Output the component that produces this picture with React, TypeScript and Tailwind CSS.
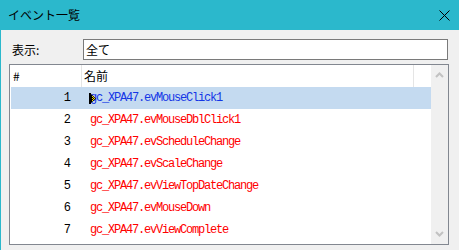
import React from 'react';

const EVENTS = [
  'gc_XPA47.evMouseClick1',
  'gc_XPA47.evMouseDblClick1',
  'gc_XPA47.evScheduleChange',
  'gc_XPA47.evScaleChange',
  'gc_XPA47.evViewTopDateChange',
  'gc_XPA47.evMouseDown',
  'gc_XPA47.evViewComplete',
];

const ui = { fontFamily: '"Noto Sans CJK JP", "Noto Sans", sans-serif' };
const mono = { fontFamily: '"Liberation Mono", "DejaVu Sans Mono", monospace' };

const Cursor: React.FC = () => (
  <svg className="absolute left-[-1px] top-[4px]" width="7" height="11" viewBox="0 0 7 11">
    <rect x="0" y="0" width="2" height="11" fill="#000" />
    <polygon points="2,1 7,5.5 2,10" fill="#000" />
    <rect x="3" y="3" width="1" height="1" fill="#f5e000" />
    <rect x="3" y="5" width="1" height="1" fill="#f5e000" />
    <rect x="4" y="4" width="1" height="1" fill="#f5e000" />
    <rect x="4" y="6" width="1" height="1" fill="#f5e000" />
    <rect x="3" y="7" width="1" height="1" fill="#f5e000" />
    <rect x="5" y="5" width="1" height="1" fill="#f5e000" />
  </svg>
);

const App: React.FC = () => {
  return (
    <div className="w-[459px] h-[250px] bg-[#f0f0f0] border-l border-[#2bb8cc] flex flex-col overflow-hidden" style={ui}>
      {/* タイトルバー */}
      <div className="h-[30px] bg-[#2bb8cc] flex items-center justify-between pl-[7px] pr-[9px] shrink-0">
        <span className="text-[12px] text-black">イベント一覧</span>
        <svg width="11" height="11" viewBox="0 0 11 11">
          <path d="M0.5 0.5 L10.5 10.5 M10.5 0.5 L0.5 10.5" stroke="#000" strokeWidth="1" />
        </svg>
      </div>

      {/* 表示フィルタ */}
      <div className="flex items-center mt-[9px] h-[21px]">
        <span className="w-[82px] pl-[11px] text-[12px] text-black">表示:</span>
        <div className="w-[365px] h-[21px] bg-white border border-[#7a7a7a] flex items-center pl-[2px] text-[12px] text-black">
          全て
        </div>
      </div>

      {/* 一覧 */}
      <div className="ml-[8px] mt-[4px] w-[440px] h-[181px] border border-[#828790] bg-white flex">
        <div className="flex-1 flex flex-col">
          <div className="h-[22px] flex items-center text-[12px] text-black">
            <div className="w-[72px] h-full flex items-center pl-[3px] border-r border-[#e5e5e5]">#</div>
            <div className="w-[332px] h-full flex items-center pl-[2px] border-r border-[#e5e5e5]">名前</div>
          </div>
          {EVENTS.map((name, i) => {
            const selected = i === 0;
            return (
              <div
                key={name}
                className={`h-[22px] ml-[1px] flex items-center text-[12px] ${selected ? 'bg-[#c4daf0]' : ''}`}
                style={mono}
              >
                <div className="w-[65px] text-right pr-[5px] text-black">{i + 1}</div>
                <div className={`relative ml-[14px] tracking-[-1.2px] ${selected ? 'text-[#1436e6]' : 'text-[#ff0000]'}`}>
                  {selected && <Cursor />}
                  {name}
                </div>
              </div>
            );
          })}
        </div>
        {/* スクロールバー */}
        <div className="w-[17px] bg-[#f0f0f0] flex flex-col items-center justify-between py-[7px]">
          <svg width="9" height="6" viewBox="0 0 9 6">
            <path d="M1 5 L4.5 1.5 L8 5" stroke="#c2c2c2" strokeWidth="2" fill="none" />
          </svg>
          <svg width="9" height="6" viewBox="0 0 9 6">
            <path d="M1 1 L4.5 4.5 L8 1" stroke="#c2c2c2" strokeWidth="2" fill="none" />
          </svg>
        </div>
      </div>
    </div>
  );
};

export default App;
